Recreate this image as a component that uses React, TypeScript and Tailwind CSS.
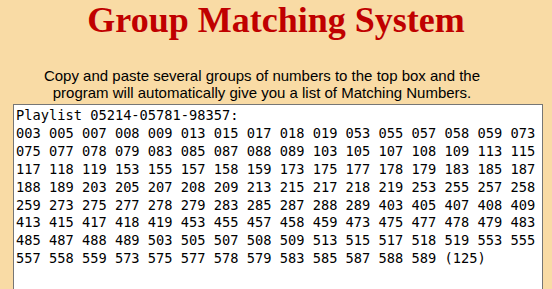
import React from "react";

const lines = [
  "Playlist 05214-05781-98357:",
  "003 005 007 008 009 013 015 017 018 019 053 055 057 058 059 073",
  "075 077 078 079 083 085 087 088 089 103 105 107 108 109 113 115",
  "117 118 119 153 155 157 158 159 173 175 177 178 179 183 185 187",
  "188 189 203 205 207 208 209 213 215 217 218 219 253 255 257 258",
  "259 273 275 277 278 279 283 285 287 288 289 403 405 407 408 409",
  "413 415 417 418 419 453 455 457 458 459 473 475 477 478 479 483",
  "485 487 488 489 503 505 507 508 509 513 515 517 518 519 553 555",
  "557 558 559 573 575 577 578 579 583 585 587 588 589 (125)",
];

export default function App() {
  return (
    <div className="h-screen w-full bg-[#f9dba5] overflow-hidden">
      <h1 className="text-center text-[#c00000] font-bold text-[36px] leading-[40px] font-['Georgia','Liberation_Serif',serif]">
        Group Matching System
      </h1>
      <p className="text-center text-black text-[15px] leading-[17px] mt-[27px] pl-[20px] pr-[48px] font-['Liberation_Sans',Arial,sans-serif]">
        Copy and paste several groups of numbers to the top box and the program will automatically give you a list of Matching Numbers.
      </p>
      <div className="pl-[13px] mt-[3px]">
        <div className="w-[530px] h-[200px] bg-white border border-[#767676] px-[2px] pt-[2px] text-black text-[13.7px] leading-[17.9px] whitespace-pre font-['DejaVu_Sans_Mono',monospace]">
          {lines.join("\n")}
        </div>
      </div>
    </div>
  );
}
